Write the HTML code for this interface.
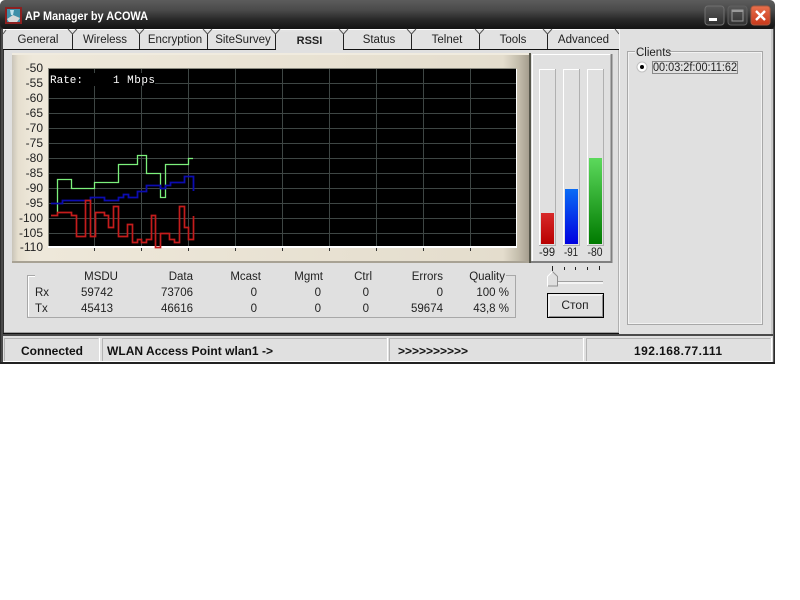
<!DOCTYPE html>
<html><head><meta charset="utf-8"><title>AP Manager by ACOWA</title>
<style>
html,body{margin:0;padding:0;background:#fff;width:800px;height:600px;overflow:hidden}
svg{display:block}
text{font-family:"Liberation Sans",sans-serif;font-size:11.5px;fill:#222}
.b{font-weight:bold;font-size:12px;fill:#111}
.r{text-anchor:end}
.m{text-anchor:middle}
.y{font-size:12px;text-anchor:end}
</style></head><body>
<svg width="800" height="600" viewBox="0 0 800 600" xmlns="http://www.w3.org/2000/svg">
<defs>
<linearGradient id="tb" x1="0" y1="0" x2="0" y2="1"><stop offset="0" stop-color="#5c5c5c"/><stop offset=".35" stop-color="#4a4a4a"/><stop offset=".7" stop-color="#262626"/><stop offset="1" stop-color="#141414"/></linearGradient>
<linearGradient id="pl" x1="0" y1="0" x2="1" y2="0"><stop offset="0" stop-color="#c9c4b8"/><stop offset=".012" stop-color="#e6dfcf"/><stop offset=".04" stop-color="#eee8da"/><stop offset=".95" stop-color="#e4ddcd"/><stop offset=".98" stop-color="#c4bdac"/><stop offset="1" stop-color="#a49d8e"/></linearGradient>
<linearGradient id="red" x1="0" y1="0" x2="0" y2="1"><stop offset="0" stop-color="#d82a2a"/><stop offset="1" stop-color="#b80000"/></linearGradient>
<linearGradient id="blue" x1="0" y1="0" x2="0" y2="1"><stop offset="0" stop-color="#0a6cf5"/><stop offset="1" stop-color="#0000e0"/></linearGradient>
<linearGradient id="green" x1="0" y1="0" x2="0" y2="1"><stop offset="0" stop-color="#5cd95c"/><stop offset="1" stop-color="#007a00"/></linearGradient>
<linearGradient id="cl" x1="0" y1="0" x2="0" y2="1"><stop offset="0" stop-color="#e8704c"/><stop offset="1" stop-color="#c8381a"/></linearGradient>
<linearGradient id="bt" x1="0" y1="0" x2="0" y2="1"><stop offset="0" stop-color="#5a5a5a"/><stop offset="1" stop-color="#303030"/></linearGradient>
</defs>

<!-- window frame -->
<path d="M0 364V7Q0 0 7 0H768Q775 0 775 7V364Z" fill="#2c2c2c"/>
<rect x="0" y="0" width="775" height="29" fill="url(#tb)" rx="5"/>
<rect x="1" y="29" width="2" height="333" fill="#4a4a4a"/>
<rect x="773" y="29" width="1" height="333" fill="#5a5a5a"/>
<rect x="3" y="29" width="770" height="333" fill="#e0e0e0"/>

<!-- title bar -->
<rect x="5" y="7" width="17" height="17" fill="#8c2020"/>
<rect x="7" y="9" width="13" height="13" fill="#3f8fa8"/>
<path d="M7 19l6-4 7 3-3 4H9z" fill="#d8d8d8"/>
<path d="M10 10h4l-1 5h-2z" fill="#bfe0ea"/>
<text x="25" y="20" class="b" style="fill:#fff" textLength="123" lengthAdjust="spacingAndGlyphs">AP Manager by ACOWA</text>
<rect x="705" y="6" width="19" height="19" rx="3" fill="url(#bt)" stroke="#707070"/>
<rect x="709" y="18" width="8" height="3" fill="#fff"/>
<rect x="728" y="6" width="19" height="19" rx="3" fill="url(#bt)" stroke="#606060"/>
<rect x="732" y="10" width="11" height="11" fill="none" stroke="#9a9a9a"/>
<rect x="732" y="10" width="11" height="2" fill="#9a9a9a"/>
<rect x="751" y="6" width="19" height="19" rx="3" fill="url(#cl)" stroke="#a85a40"/>
<path d="M756 11l9 9M765 11l-9 9" stroke="#fff" stroke-width="2.4"/>

<!-- tabs -->
<rect x="3" y="29" width="616" height="20" fill="#e2e2e2"/>
<rect x="3" y="29" width="770" height="1" fill="#fff"/>
<rect x="619" y="29" width="154" height="305" fill="#e0e0e0"/>
<rect x="3" y="49" width="616" height="1" fill="#111"/>
<rect x="276" y="32" width="67" height="20" fill="#e0e0e0"/>
<rect x="276" y="49" width="67" height="3" fill="#e0e0e0"/>
<g fill="none" stroke="#222" stroke-width="1">
<path d="M72.500 34V49M139.500 34V49M207.500 34V49M275.500 34V49M343.500 34V49M411.500 34V49M479.500 34V49M547.500 34V49"/>
</g>
<g fill="none" stroke="#555">
<path d="M68 29l4.500 5 4.500-5M135 29l4.500 5 4.500-5M203 29l4.500 5 4.500-5M271 29l4.500 5 4.500-5M339 29l4.500 5 4.500-5M407 29l4.500 5 4.500-5M475 29l4.500 5 4.500-5M543 29l4.500 5 4.500-5M3 34l3-4M615 29l4 5"/>
</g>
<text x="38" y="43" class="m">General</text>
<text x="105" y="43" class="m">Wireless</text>
<text x="175" y="43" class="m">Encryption</text>
<text x="243" y="43" class="m">SiteSurvey</text>
<text x="309.500" y="44" class="m" style="font-weight:bold;font-size:11px">RSSI</text>
<text x="379" y="43" class="m">Status</text>
<text x="447" y="43" class="m">Telnet</text>
<text x="513" y="43" class="m">Tools</text>
<text x="583.500" y="43" class="m">Advanced</text>

<!-- separators -->
<rect x="618" y="50" width="1" height="283" fill="#b0b0b0"/>
<rect x="619" y="29" width="1" height="304" fill="#f4f4f4"/>
<rect x="771" y="29" width="2" height="305" fill="#c8c8c8"/>
<rect x="3" y="333" width="616" height="1" fill="#111"/>
<rect x="3" y="332" width="616" height="1" fill="#a0a0a0"/>
<rect x="3" y="50" width="1" height="283" fill="#333"/>

<!-- chart panel -->
<rect x="12" y="53" width="517" height="209" fill="url(#pl)"/>
<rect x="12" y="53" width="517" height="2" fill="#f0ebdf"/>
<rect x="12" y="261" width="517" height="2" fill="#a8a294"/>
<rect x="529" y="53" width="2" height="210" fill="#555549"/>
<text x="43" y="72" class="y">-50</text>
<text x="43" y="87" class="y">-55</text>
<text x="43" y="102" class="y">-60</text>
<text x="43" y="117" class="y">-65</text>
<text x="43" y="132" class="y">-70</text>
<text x="43" y="147" class="y">-75</text>
<text x="43" y="162" class="y">-80</text>
<text x="43" y="177" class="y">-85</text>
<text x="43" y="192" class="y">-90</text>
<text x="43" y="207" class="y">-95</text>
<text x="43" y="222" class="y">-100</text>
<text x="43" y="237" class="y">-105</text>
<text x="43" y="251" class="y">-110</text>
<rect x="49" y="69" width="467" height="177" fill="#000"/>
<rect x="48" y="69" width="1" height="177" fill="#8a8a80"/>
<rect x="48" y="68" width="468" height="1" fill="#8a8a80"/>
<rect x="48" y="246" width="468" height="2" fill="#fff"/>
<rect x="516" y="69" width="1" height="179" fill="#fff"/>
<g stroke="#3e4644" stroke-width="1" fill="none">
<path d="M94.500 69V246M141.500 69V246M188.500 69V246M235.500 69V246M282.500 69V246M329.500 69V246M376.500 69V246M423.500 69V246M470.500 69V246"/>
<path d="M49 83.500H516M49 98.500H516M49 113.500H516M49 128.500H516M49 143.500H516M49 158.500H516M49 173.500H516M49 188.500H516M49 203.500H516M49 218.500H516M49 233.500H516"/>
</g>
<g stroke="#333" fill="none"><path d="M94.500 248V251M141.500 248V251M188.500 248V251M235.500 248V251M282.500 248V251M329.500 248V251M376.500 248V251M423.500 248V251M470.500 248V251"/></g>
<rect x="49" y="73" width="106" height="13" fill="#000"/>
<text x="50" y="83" style="font-family:'Liberation Mono',monospace;font-size:11px;fill:#fff" textLength="33">Rate:</text>
<text x="113" y="83" style="font-family:'Liberation Mono',monospace;font-size:11px;fill:#fff" textLength="42">1 Mbps</text>
<path fill="none" stroke="#7cf07c" stroke-width="1.300" d="M57.500 212V179.500H71.500V188.500H94.500V182.500H118.500V164.500H137.500V155.500H146.500V173.500H160.500V197.500H165.500V164.500H188.500V158.500H193"/>
<path fill="none" stroke="#0c0cb0" stroke-width="1.800" d="M51 203.500H62.500V200.500H90.500V197.500H104.500V200.500H118.500V197.500H123.500V194.500H128.500V197.500H137.500V191.500H146.500V185.500H160.500V188.500H165.500V185.500H170.500V182.500H184.500V176.500H193.500V191"/>
<path fill="none" stroke="#c41c1c" stroke-width="1.700" d="M51 215.500H57.500V212.500H71.500V215.500H76.500V236.500H85.500V200.500H90.500V236.500H95.500V212.500H104.500V215.500H108.500V227.500H113.500V206.500H118.500V236.500H127.500V224.500H132.500V242.500H137.500V239.500H141.500V242.500H146.500V239.500H151.500V215.500H155.500V247.500H160.500V233.500H169.500V239.500H174.500V242.500H179.500V206.500H184.500V227.500H188.500V239.500H193.500V216"/>

<!-- bars panel -->
<rect x="531" y="53" width="81" height="210" fill="#e0e0e0"/>
<path d="M532.500 261.500V54.500H611" stroke="#fff" fill="none"/>
<path d="M611.500 54V262H531" stroke="#808080" stroke-width="2" fill="none"/>
<g fill="none">
<path d="M539.500 245V69.500H555.500" stroke="#fff"/><path d="M555.500 69V245.500H539" stroke="#b0b0b0"/>
<path d="M563.500 245V69.500H579.500" stroke="#fff"/><path d="M579.500 69V245.500H563" stroke="#b0b0b0"/>
<path d="M587.500 245V69.500H603.500" stroke="#fff"/><path d="M603.500 69V245.500H587" stroke="#b0b0b0"/>
</g>
<rect x="541" y="213" width="13" height="31" fill="url(#red)"/>
<rect x="565" y="189" width="13" height="55" fill="url(#blue)"/>
<rect x="589" y="158" width="13" height="86" fill="url(#green)"/>
<text x="547" y="256" class="m" style="font-size:12px" textLength="16" lengthAdjust="spacingAndGlyphs">-99</text>
<text x="571" y="256" class="m" style="font-size:12px" textLength="14" lengthAdjust="spacingAndGlyphs">-91</text>
<text x="595" y="256" class="m" style="font-size:12px" textLength="15" lengthAdjust="spacingAndGlyphs">-80</text>

<!-- stats -->
<path d="M35 275.500H27.500V317.500H515.500V275.500H506" fill="none" stroke="#a8a8a8"/>
<path d="M35 276.500H28.500V316.500" fill="none" stroke="#fff"/>
<text x="118" y="280" class="r">MSDU</text><text x="193" y="280" class="r">Data</text><text x="261" y="280" class="r">Mcast</text><text x="323" y="280" class="r">Mgmt</text><text x="372" y="280" class="r">Ctrl</text><text x="443" y="280" class="r">Errors</text><text x="505" y="280" class="r">Quality</text>
<text x="35" y="296">Rx</text><text x="113" y="296" class="r">59742</text><text x="193" y="296" class="r">73706</text><text x="257" y="296" class="r">0</text><text x="321" y="296" class="r">0</text><text x="369" y="296" class="r">0</text><text x="443" y="296" class="r">0</text><text x="509" y="296" class="r">100 %</text>
<text x="35" y="312">Tx</text><text x="113" y="312" class="r">45413</text><text x="193" y="312" class="r">46616</text><text x="257" y="312" class="r">0</text><text x="321" y="312" class="r">0</text><text x="369" y="312" class="r">0</text><text x="443" y="312" class="r">59674</text><text x="509" y="312" class="r">43,8 %</text>

<!-- slider -->
<path d="M552.500 266V271M564.500 267V270M575.500 267V270M587.500 267V270M599.500 266V270" stroke="#222" fill="none"/>
<rect x="557" y="281" width="46" height="1" fill="#a0a0a0"/><rect x="557" y="282" width="46" height="2" fill="#f4f4f4"/>
<path d="M547.500 286V276.500L552.500 271.500L557.500 276.500V286Z" fill="#e0e0e0" stroke="#fff"/>
<path d="M552.500 271.500L557.500 276.500V286H548" fill="none" stroke="#909090"/>

<!-- button -->
<rect x="547.500" y="293.500" width="56" height="24" fill="#e0e0e0" stroke="#000"/>
<path d="M549 316V295H602" stroke="#fff" fill="none"/>
<path d="M602.500 295V316.500H549" stroke="#909090" fill="none"/>
<text x="575" y="309" class="m" style="font-size:12px">Стоп</text>

<!-- clients -->
<rect x="627.500" y="51.500" width="135" height="273" fill="none" stroke="#a8a8a8"/>
<rect x="628.500" y="52.500" width="133" height="271" fill="none" stroke="#f2f2f2"/>
<rect x="635" y="47" width="33" height="10" fill="#e0e0e0"/>
<text x="636" y="56">Clients</text>
<circle cx="642" cy="67" r="5" fill="#fff" stroke="#c0c0c0"/>
<circle cx="642" cy="67" r="2" fill="#000"/>
<rect x="652.500" y="61.500" width="85" height="12" fill="none" stroke="#333" stroke-dasharray="1 1"/>
<text x="653" y="71" textLength="84" lengthAdjust="spacingAndGlyphs">00:03:2f:00:11:62</text>

<!-- status bar -->
<rect x="3" y="334" width="770" height="28" fill="#e0e0e0"/>
<rect x="3" y="334" width="770" height="2" fill="#4a4a4a"/>
<g fill="none">
<path d="M4.500 361V338.500H98.500" stroke="#b4b4b4"/><path d="M99.500 338V361" stroke="#fff"/>
<path d="M102.500 361V338.500H386.500" stroke="#b4b4b4"/><path d="M387.500 338V361" stroke="#fff"/>
<path d="M389.500 361V338.500H582.500" stroke="#b4b4b4"/><path d="M583.500 338V361" stroke="#fff"/>
<path d="M586.500 361V338.500H770.500" stroke="#b4b4b4"/><path d="M771.500 338V361" stroke="#fff"/>
<path d="M3 361.500H772" stroke="#fff"/>
</g>
<rect x="0" y="362" width="775" height="2" fill="#222"/>
<text x="21" y="355" class="b" textLength="62">Connected</text>
<text x="107" y="355" class="b" textLength="166">WLAN Access Point wlan1 -&gt;</text>
<text x="398" y="355" class="b" textLength="70">&gt;&gt;&gt;&gt;&gt;&gt;&gt;&gt;&gt;&gt;</text>
<text x="634" y="355" class="b" textLength="88">192.168.77.111</text>
</svg>
</body></html>
